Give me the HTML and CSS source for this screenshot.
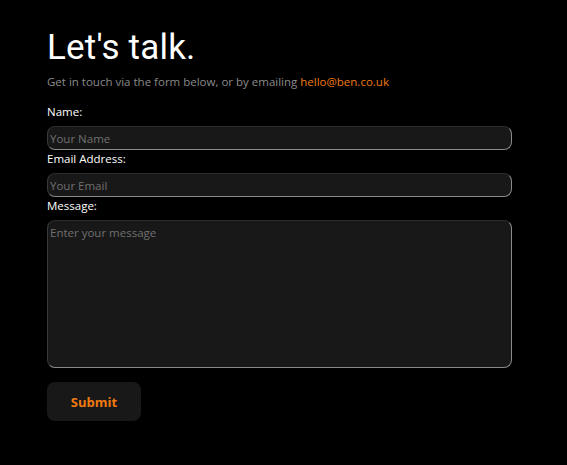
FILE: index.html
```html
<!DOCTYPE html>
<html>
<head>
<meta charset="utf-8">
<link rel="stylesheet" href="styles.css">
</head>
<body>
<main class="contact">
  <h1 class="title">Let's talk.</h1>
  <p class="intro">Get in touch via the form below, or by emailing <a class="mail" href="#">hello@ben.co.uk</a></p>
  <form class="form">
    <label class="label" for="name">Name:</label>
    <input class="field" id="name" type="text" placeholder="Your Name">
    <label class="label" for="email">Email Address:</label>
    <input class="field" id="email" type="email" placeholder="Your Email">
    <label class="label" for="msg">Message:</label>
    <textarea class="field area" id="msg" placeholder="Enter your message"></textarea>
    <button class="submit" type="button">Submit</button>
  </form>
</main>
</body>
</html>
```
FILE: styles.css
```css
html, body {
  margin: 0;
  background: #000;
  height: 100%;
}
body {
  font-family: "Open Sans", "Noto Sans", sans-serif;
  color: #fff;
}
.contact {
  padding: 28px 0 0 47px;
  width: 465px;
}
.title {
  margin: 0;
  font-family: Roboto, sans-serif;
  font-weight: 400;
  font-size: 35px;
  line-height: 40px;
  letter-spacing: 0.2px;
}
.intro {
  margin: 6px 0 0;
  font-size: 11.5px;
  line-height: 16px;
  color: #8a8a8a;
}
.mail {
  color: #f07a12;
  text-decoration: none;
}
.form {
  display: flex;
  flex-direction: column;
  margin-top: 14px;
}
.label {
  font-size: 11.5px;
  line-height: 16px;
  color: #fff;
  margin-bottom: 6px;
}
.field {
  box-sizing: border-box;
  width: 465px;
  height: 24px;
  margin: 0 0 1px;
  padding: 3px 2px;
  border: 1px solid;
  border-color: #2c2c2c #8a8a8a #8a8a8a #3a3a3a;
  border-radius: 8px;
  background: #181818;
  color: #ddd;
  font-family: "Open Sans", "Noto Sans", sans-serif;
  font-size: 11.5px;
  outline: none;
}
.field::placeholder {
  color: #707070;
}
.area {
  height: 148px;
  resize: none;
  padding: 4px 2px;
  line-height: 16px;
}
.submit {
  align-self: flex-start;
  margin-top: 13px;
  width: 94px;
  height: 39px;
  border: none;
  border-radius: 8px;
  background: #181818;
  color: #f07a12;
  font-family: "Open Sans", "Noto Sans", sans-serif;
  font-weight: 700;
  font-size: 13px;
}
```
